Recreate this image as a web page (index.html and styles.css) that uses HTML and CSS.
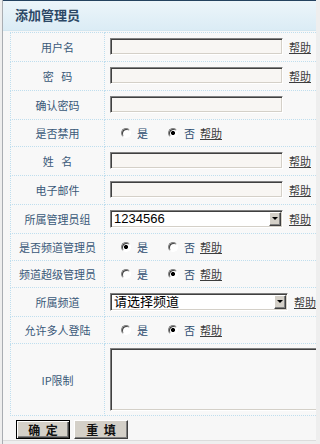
FILE: index.html
```html
<!DOCTYPE html>
<html lang="zh-CN">
<head>
<meta charset="utf-8">
<title>添加管理员</title>
<link rel="stylesheet" href="styles.css">
</head>
<body>
<div class="frame">
  <div class="title">添加管理员</div>
  <div class="content">
    <table class="form">
      <colgroup><col class="col-label"><col></colgroup>
      <tr class="row-input">
        <td class="label">用户名</td>
        <td class="field"><div class="line"><input class="text" type="text"><a class="help" href="#">帮助</a></div></td>
      </tr>
      <tr class="row-input">
        <td class="label"><span class="spaced">密 码</span></td>
        <td class="field"><div class="line"><input class="text" type="password"><a class="help" href="#">帮助</a></div></td>
      </tr>
      <tr class="row-input">
        <td class="label">确认密码</td>
        <td class="field"><div class="line"><input class="text" type="password"></div></td>
      </tr>
      <tr class="row-radio">
        <td class="label">是否禁用</td>
        <td class="field"><div class="line">
          <label class="opt opt-first"><input class="radio" type="radio" name="disabled">是</label>
          <label class="opt"><input class="radio" type="radio" name="disabled" checked>否</label>
          <a class="help help-radio" href="#">帮助</a>
        </div></td>
      </tr>
      <tr class="row-input">
        <td class="label"><span class="spaced">姓 名</span></td>
        <td class="field"><div class="line"><input class="text" type="text"><a class="help" href="#">帮助</a></div></td>
      </tr>
      <tr class="row-input">
        <td class="label">电子邮件</td>
        <td class="field"><div class="line"><input class="text" type="text"><a class="help" href="#">帮助</a></div></td>
      </tr>
      <tr class="row-input">
        <td class="label">所属管理员组</td>
        <td class="field"><div class="line">
          <span class="select"><select><option>1234566</option></select><span class="arrow"><span class="tri"></span></span></span>
          <a class="help" href="#">帮助</a>
        </div></td>
      </tr>
      <tr class="row-radio">
        <td class="label">是否频道管理员</td>
        <td class="field"><div class="line">
          <label class="opt opt-first"><input class="radio" type="radio" name="chan" checked>是</label>
          <label class="opt"><input class="radio" type="radio" name="chan">否</label>
          <a class="help help-radio" href="#">帮助</a>
        </div></td>
      </tr>
      <tr class="row-radio">
        <td class="label">频道超级管理员</td>
        <td class="field"><div class="line">
          <label class="opt opt-first"><input class="radio" type="radio" name="super">是</label>
          <label class="opt"><input class="radio" type="radio" name="super" checked>否</label>
          <a class="help help-radio" href="#">帮助</a>
        </div></td>
      </tr>
      <tr class="row-input">
        <td class="label">所属频道</td>
        <td class="field"><div class="line">
          <span class="select select-wide"><select><option>请选择频道</option></select><span class="arrow"><span class="tri"></span></span></span>
          <a class="help" href="#">帮助</a>
        </div></td>
      </tr>
      <tr class="row-radio">
        <td class="label">允许多人登陆</td>
        <td class="field"><div class="line">
          <label class="opt opt-first"><input class="radio" type="radio" name="multi">是</label>
          <label class="opt"><input class="radio" type="radio" name="multi" checked>否</label>
          <a class="help help-radio" href="#">帮助</a>
        </div></td>
      </tr>
      <tr class="row-area">
        <td class="label">IP限制</td>
        <td class="field"><textarea class="area"></textarea></td>
      </tr>
    </table>
    <div class="actions">
      <button class="btn btn-default" type="submit"><span class="spaced-btn">确 定</span></button>
      <button class="btn" type="reset"><span class="spaced-btn">重 填</span></button>
    </div>
  </div>
  <div class="footer"></div>
</div>
</body>
</html>
```
FILE: styles.css
```css
html, body {
  margin: 0;
  padding: 0;
}
body {
  width: 316px;
  height: 444px;
  overflow: hidden;
  background: #eeeeee;
  font-family: "Noto Sans CJK SC", sans-serif;
  font-size: 11px;
  color: #3a5878;
}
.frame {
  margin-left: 2px;
  border-left: 1px solid #a9adb2;
  background: #f7f7f7;
  height: 444px;
  display: flex;
  flex-direction: column;
  overflow: hidden;
}
.title {
  flex: none;
  height: 29px;
  border-top: 1px solid #24425f;
  border-bottom: 1px solid #d2e6f0;
  background: linear-gradient(#ecf5fa, #dbecf5);
  padding-left: 12px;
  font-size: 13px;
  font-weight: bold;
  line-height: 28px;
  color: #2c4866;
}
.content {
  flex: none;
  padding: 1px 0 0 7px;
}
.form {
  border-collapse: collapse;
  table-layout: fixed;
  width: 340px;
  background: #f8f8f8;
}
.col-label {
  width: 94px;
}
.form td {
  border: 1px dotted #bfdeee;
  vertical-align: middle;
}
.label {
  text-align: center;
  padding: 0 1px;
  white-space: nowrap;
  color: #3a5878;
}
.spaced {
  word-spacing: 5px;
}
.field {
  padding: 5px 5px 6px 5px;
  white-space: nowrap;
}
.row-radio .field {
  padding: 5px 5px 5px 5px;
}
.row-area .field {
  padding: 4px 5px 4px 5px;
}
.line {
  display: flex;
  align-items: center;
  height: 17px;
}
.row-radio .line {
  height: 16px;
}
.text {
  box-sizing: border-box;
  width: 173px;
  height: 17px;
  margin: 0;
  padding: 0 2px;
  border: 1px solid;
  border-color: #808080 #ffffff #ffffff #808080;
  box-shadow: inset 1px 1px #404040, inset -1px -1px #d4d0c8;
  background: #f8f6f3;
  font-size: 12px;
  outline: none;
}
.help {
  margin-left: 6px;
  color: #3c3c3c;
  text-decoration: underline;
  font-size: 11px;
}
.help-radio {
  margin-left: 5px;
}
.opt {
  display: inline-flex;
  align-items: center;
  color: #2f4e70;
  font-size: 11px;
}
.opt-first {
  margin-left: 11px;
}
.opt + .opt {
  margin-left: 20px;
}
.radio {
  appearance: none;
  -webkit-appearance: none;
  box-sizing: border-box;
  width: 10px;
  height: 10px;
  margin: 0 6px 0 0;
  border-radius: 50%;
  border: 1px solid;
  border-color: #808080 #ffffff #ffffff #808080;
  box-shadow: inset 1px 1px #404040;
  background: #ffffff;
}
.radio:checked {
  background: radial-gradient(circle, #000000 0 1.8px, #ffffff 2.3px);
}
.select {
  box-sizing: border-box;
  display: inline-flex;
  align-items: stretch;
  width: 173px;
  height: 18px;
  border: 1px solid;
  border-color: #808080 #ffffff #ffffff #808080;
  box-shadow: inset 1px 1px #404040, inset -1px -1px #d4d0c8;
  background: #ffffff;
  padding: 2px 2px 2px 2px;
}
.select-wide {
  width: 178px;
}
.select select {
  appearance: none;
  -webkit-appearance: none;
  flex: 1;
  min-width: 0;
  border: 0;
  margin: 0;
  padding: 0 0 0 1px;
  background: transparent;
  font-family: "Liberation Sans", "Noto Sans CJK SC", sans-serif;
  font-size: 13px;
  line-height: 12px;
  color: #000000;
  outline: none;
}
.arrow {
  box-sizing: border-box;
  flex: none;
  width: 12px;
  margin: -1px -1px -1px 0;
  display: flex;
  align-items: center;
  justify-content: center;
  background: #d4d0c8;
  border: 1px solid;
  border-color: #ffffff #404040 #404040 #ffffff;
  box-shadow: inset -1px -1px #808080;
}
.tri {
  width: 0;
  height: 0;
  border-left: 3px solid transparent;
  border-right: 3px solid transparent;
  border-top: 3px solid #000000;
}
.area {
  display: block;
  box-sizing: border-box;
  width: 230px;
  height: 63px;
  margin: 0;
  padding: 2px;
  resize: none;
  border: 1px solid;
  border-color: #808080 #ffffff #ffffff #808080;
  box-shadow: inset 1px 1px #404040, inset -1px -1px #d4d0c8;
  background: #f8f8f8;
  outline: none;
}
.actions {
  display: flex;
  gap: 4px;
  padding: 4px 0 1px 6px;
}
.btn {
  box-sizing: border-box;
  width: 54px;
  height: 19px;
  margin: 0;
  padding: 0;
  background: #d4d0c8;
  border: 1px solid;
  border-color: #ffffff #404040 #404040 #ffffff;
  box-shadow: inset -1px -1px #808080;
  font-family: "Noto Sans CJK SC", sans-serif;
  font-size: 12px;
  font-weight: bold;
  line-height: 15px;
  color: #111111;
}
.btn-default {
  border-color: #000000;
  box-shadow: inset 1px 1px #ffffff, inset -1px -1px #404040, inset -2px -2px #808080;
}
.spaced-btn {
  word-spacing: 3px;
}
.footer {
  flex: 1;
  border-top: 1px solid #dcdcdc;
  background: #efefef;
}
```
